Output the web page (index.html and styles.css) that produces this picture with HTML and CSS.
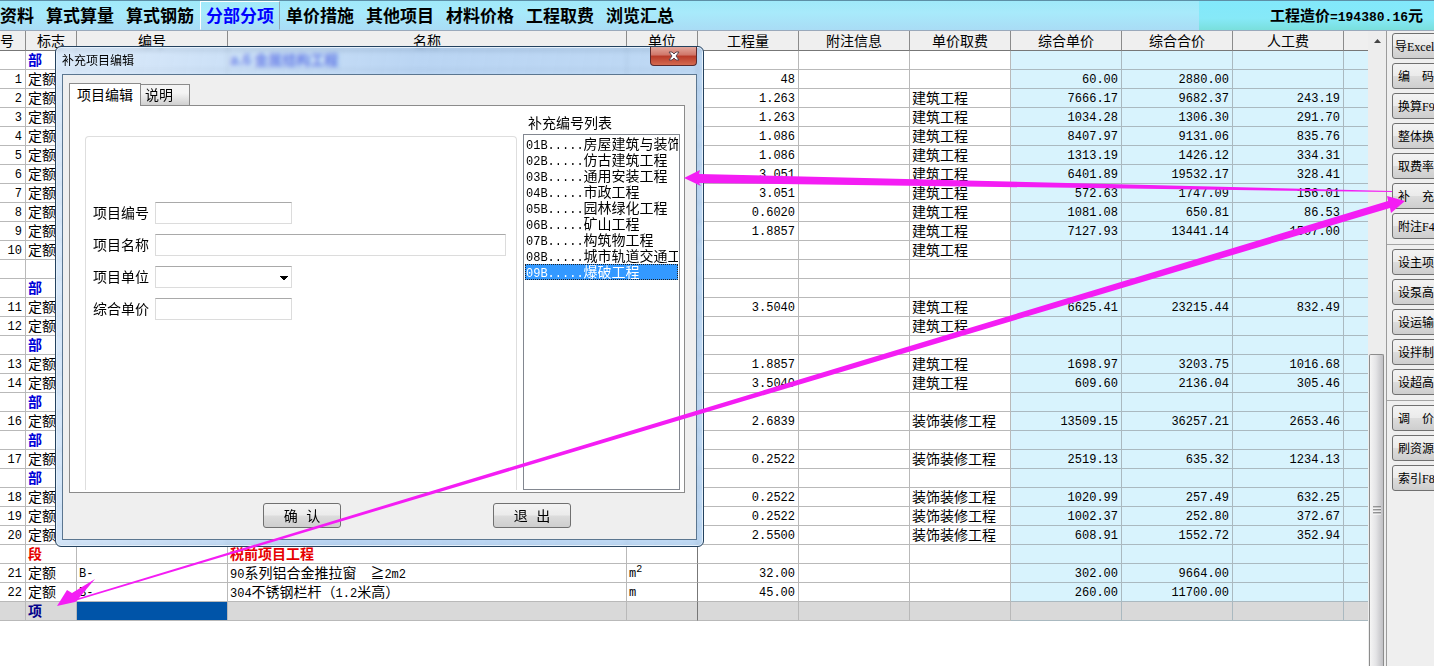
FILE: index.html
```html
<!DOCTYPE html>
<html lang="zh-CN">
<head>
<meta charset="utf-8">
<title>分部分项</title>
<link rel="stylesheet" href="styles.css">
</head>
<body>
<div class="app">
  <header class="topbar">
    <nav class="menu">
      <a class="menu-item first" href="#">资料</a>
      <a class="menu-item" href="#">算式算量</a>
      <a class="menu-item" href="#">算式钢筋</a>
      <a class="menu-item active" href="#">分部分项</a>
      <a class="menu-item" href="#">单价措施</a>
      <a class="menu-item" href="#">其他项目</a>
      <a class="menu-item" href="#">材料价格</a>
      <a class="menu-item" href="#">工程取费</a>
      <a class="menu-item" href="#">浏览汇总</a>
    </nav>
    <div class="total">工程造价<span class="total-num">=194380.16</span>元</div>
  </header>

  <main class="workspace">
    <section class="sheet">
      <table class="grid">
        <colgroup>
          <col class="c-no"><col class="c-flag"><col class="c-code"><col class="c-name"><col class="c-unit"><col class="c-qty"><col class="c-money"><col class="c-qty"><col class="c-money"><col class="c-money"><col class="c-money"><col class="c-rest">
        </colgroup>
        <thead>
          <tr><th class="cut">号</th><th>标志</th><th>编号</th><th>名称</th><th>单位</th><th>工程量</th><th>附注信息</th><th>单价取费</th><th>综合单价</th><th>综合合价</th><th>人工费</th><th></th></tr>
        </thead>
        <tbody>
          <tr class="part"><td></td><td>部</td><td></td><td>a.6 金属结构工程</td><td></td><td></td><td></td><td></td><td></td><td></td><td></td><td></td></tr>
          <tr><td>1</td><td>定额</td><td></td><td></td><td></td><td>48</td><td></td><td></td><td>60.00</td><td>2880.00</td><td></td><td></td></tr>
          <tr><td>2</td><td>定额</td><td></td><td></td><td></td><td>1.263</td><td></td><td>建筑工程</td><td>7666.17</td><td>9682.37</td><td>243.19</td><td></td></tr>
          <tr><td>3</td><td>定额</td><td></td><td></td><td></td><td>1.263</td><td></td><td>建筑工程</td><td>1034.28</td><td>1306.30</td><td>291.70</td><td></td></tr>
          <tr><td>4</td><td>定额</td><td></td><td></td><td></td><td>1.086</td><td></td><td>建筑工程</td><td>8407.97</td><td>9131.06</td><td>835.76</td><td></td></tr>
          <tr><td>5</td><td>定额</td><td></td><td></td><td></td><td>1.086</td><td></td><td>建筑工程</td><td>1313.19</td><td>1426.12</td><td>334.31</td><td></td></tr>
          <tr><td>6</td><td>定额</td><td></td><td></td><td></td><td>3.051</td><td></td><td>建筑工程</td><td>6401.89</td><td>19532.17</td><td>328.41</td><td></td></tr>
          <tr><td>7</td><td>定额</td><td></td><td></td><td></td><td>3.051</td><td></td><td>建筑工程</td><td>572.63</td><td>1747.09</td><td>156.01</td><td></td></tr>
          <tr><td>8</td><td>定额</td><td></td><td></td><td></td><td>0.6020</td><td></td><td>建筑工程</td><td>1081.08</td><td>650.81</td><td>86.53</td><td></td></tr>
          <tr><td>9</td><td>定额</td><td></td><td></td><td></td><td>1.8857</td><td></td><td>建筑工程</td><td>7127.93</td><td>13441.14</td><td>1507.00</td><td></td></tr>
          <tr><td>10</td><td>定额</td><td></td><td></td><td></td><td></td><td></td><td>建筑工程</td><td></td><td></td><td></td><td></td></tr>
          <tr><td></td><td></td><td></td><td></td><td></td><td></td><td></td><td></td><td></td><td></td><td></td><td></td></tr>
          <tr class="part"><td></td><td>部</td><td></td><td></td><td></td><td></td><td></td><td></td><td></td><td></td><td></td><td></td></tr>
          <tr><td>11</td><td>定额</td><td></td><td></td><td></td><td>3.5040</td><td></td><td>建筑工程</td><td>6625.41</td><td>23215.44</td><td>832.49</td><td></td></tr>
          <tr><td>12</td><td>定额</td><td></td><td></td><td></td><td></td><td></td><td>建筑工程</td><td></td><td></td><td></td><td></td></tr>
          <tr class="part"><td></td><td>部</td><td></td><td></td><td></td><td></td><td></td><td></td><td></td><td></td><td></td><td></td></tr>
          <tr><td>13</td><td>定额</td><td></td><td></td><td></td><td>1.8857</td><td></td><td>建筑工程</td><td>1698.97</td><td>3203.75</td><td>1016.68</td><td></td></tr>
          <tr><td>14</td><td>定额</td><td></td><td></td><td></td><td>3.5040</td><td></td><td>建筑工程</td><td>609.60</td><td>2136.04</td><td>305.46</td><td></td></tr>
          <tr class="part"><td></td><td>部</td><td></td><td></td><td></td><td></td><td></td><td></td><td></td><td></td><td></td><td></td></tr>
          <tr><td>16</td><td>定额</td><td></td><td></td><td></td><td>2.6839</td><td></td><td>装饰装修工程</td><td>13509.15</td><td>36257.21</td><td>2653.46</td><td></td></tr>
          <tr class="part"><td></td><td>部</td><td></td><td></td><td></td><td></td><td></td><td></td><td></td><td></td><td></td><td></td></tr>
          <tr><td>17</td><td>定额</td><td></td><td></td><td></td><td>0.2522</td><td></td><td>装饰装修工程</td><td>2519.13</td><td>635.32</td><td>1234.13</td><td></td></tr>
          <tr class="part"><td></td><td>部</td><td></td><td></td><td></td><td></td><td></td><td></td><td></td><td></td><td></td><td></td></tr>
          <tr><td>18</td><td>定额</td><td></td><td></td><td></td><td>0.2522</td><td></td><td>装饰装修工程</td><td>1020.99</td><td>257.49</td><td>632.25</td><td></td></tr>
          <tr><td>19</td><td>定额</td><td></td><td></td><td></td><td>0.2522</td><td></td><td>装饰装修工程</td><td>1002.37</td><td>252.80</td><td>372.67</td><td></td></tr>
          <tr><td>20</td><td>定额</td><td></td><td></td><td></td><td>2.5500</td><td></td><td>装饰装修工程</td><td>608.91</td><td>1552.72</td><td>352.94</td><td></td></tr>
          <tr class="segment"><td></td><td>段</td><td></td><td>税前项目工程</td><td></td><td></td><td></td><td></td><td></td><td></td><td></td><td></td></tr>
          <tr><td>21</td><td>定额</td><td>B-</td><td><span class="latin">90</span>系列铝合金推拉窗　≧<span class="latin">2m2</span></td><td>m<sup>2</sup></td><td>32.00</td><td></td><td></td><td>302.00</td><td>9664.00</td><td></td><td></td></tr>
          <tr><td>22</td><td>定额</td><td>B-</td><td><span class="latin">304</span>不锈钢栏杆（<span class="latin">1.2</span>米高）</td><td>m</td><td>45.00</td><td></td><td></td><td>260.00</td><td>11700.00</td><td></td><td></td></tr>
          <tr class="current"><td></td><td>项</td><td class="selected"></td><td></td><td></td><td></td><td></td><td></td><td></td><td></td><td></td><td></td></tr>
        </tbody>
      </table>
    </section>

    <div class="scrollbar">
      <svg class="scroll-up" viewBox="0 0 18 20"><path d="M6 12h7L9.500 8z" fill="#444"/></svg>
      <div class="thumb">
        <svg class="grip" viewBox="0 0 8 9"><path d="M0 1h8M0 4h8M0 7h8" stroke="#444"/><path d="M0 2h8M0 5h8M0 8h8" stroke="#fff"/></svg>
      </div>
    </div>

    <aside class="tools">
      <div class="tool-group">
        <button class="tool snug">导Excel</button>
        <button class="tool">编　码</button>
        <button class="tool">换算F9</button>
        <button class="tool">整体换</button>
        <button class="tool">取费率</button>
        <button class="tool">补　充</button>
        <button class="tool">附注F4</button>
      </div>
      <div class="tool-group">
        <button class="tool">设主项</button>
        <button class="tool">设泵高</button>
        <button class="tool">设运输</button>
        <button class="tool">设拌制</button>
        <button class="tool">设超高</button>
      </div>
      <div class="tool-group">
        <button class="tool">调　价</button>
        <button class="tool">刷资源</button>
        <button class="tool">索引F8</button>
      </div>
    </aside>
  </main>
</div>

<div class="dialog" role="dialog" aria-labelledby="dialog-title">
  <div class="titlebar">
    <h1 class="title" id="dialog-title">补充项目编辑</h1>
    <button class="close" aria-label="关闭">
      <svg viewBox="0 0 12 10"><path d="M1 1h3l2 2 2-2h3L8 5l3 4H8L6 7 4 9H1l3-4z" fill="#fff" stroke="#5a4650"/></svg>
    </button>
  </div>
  <div class="client">
    <div class="tabs" role="tablist">
      <button class="tab active" role="tab" aria-selected="true">项目编辑</button>
      <button class="tab" role="tab" aria-selected="false">说明</button>
    </div>
    <div class="panel">
      <form class="form">
        <label class="field-label" for="f-code">项目编号</label>
        <input class="field" id="f-code" type="text">
        <label class="field-label" for="f-name">项目名称</label>
        <input class="field wide" id="f-name" type="text">
        <label class="field-label" for="f-unit">项目单位</label>
        <select class="field" id="f-unit"><option></option></select>
        <label class="field-label" for="f-price">综合单价</label>
        <input class="field" id="f-price" type="text">
      </form>
      <div class="codes">
        <h2 class="codes-title" id="codes-title">补充编号列表</h2>
        <div class="list" role="radiogroup" aria-labelledby="codes-title">
          <label class="row"><input type="radio" name="code"><span class="latin">01B.....</span>房屋建筑与装饰</label>
          <label class="row"><input type="radio" name="code"><span class="latin">02B.....</span>仿古建筑工程</label>
          <label class="row"><input type="radio" name="code"><span class="latin">03B.....</span>通用安装工程</label>
          <label class="row"><input type="radio" name="code"><span class="latin">04B.....</span>市政工程</label>
          <label class="row"><input type="radio" name="code"><span class="latin">05B.....</span>园林绿化工程</label>
          <label class="row"><input type="radio" name="code"><span class="latin">06B.....</span>矿山工程</label>
          <label class="row"><input type="radio" name="code"><span class="latin">07B.....</span>构筑物工程</label>
          <label class="row"><input type="radio" name="code"><span class="latin">08B.....</span>城市轨道交通工</label>
          <label class="row"><input type="radio" name="code" checked><span class="latin">09B.....</span>爆破工程</label>
        </div>
      </div>
    </div>
    <div class="actions">
      <button class="action">确 认</button>
      <button class="action">退 出</button>
    </div>
  </div>
</div>

<svg class="arrows" width="1434" height="666" viewBox="0 0 1434 666" fill="#f41df4">
  <path d="M684 178L700 170L699 174L1392 191L1392 192L699 183L701 186Z"/>
  <path d="M57 606L67 590L72 593L95 579L84 592L79 598L1388 201L1387 196L1405 201L1391 213L1390 208L78 600L75 602Z"/>
</svg>
</body>
</html>
```
FILE: styles.css
```css
* { box-sizing: border-box; }

html, body { height: 100%; }

body {
  margin: 0;
  overflow: hidden;
  background: #fff;
  color: #000;
  font-family: "Noto Sans CJK SC", sans-serif;
  font-size: 14px;
}

button, input, select { font: inherit; color: inherit; }

.latin {
  font-family: "Liberation Mono", monospace;
  font-size: 12px;
  line-height: 12px;
}

.app {
  display: flex;
  flex-direction: column;
  height: 100%;
}

/* Top bar */
.topbar {
  display: flex;
  justify-content: space-between;
  height: 31px;
  border-top: 1px solid #5d8fa6;
  border-bottom: 1px solid #9aa9bb;
  background: linear-gradient(#9fe9fa, #a8eafb 40%, #a9dcf5);
}

.menu { display: flex; }

.menu-item {
  padding: 0 5px;
  border: 1px solid transparent;
  color: #000;
  font-size: 17px;
  font-weight: 700;
  line-height: 26px;
  text-decoration: none;
  white-space: nowrap;
}

.menu-item.first { padding-left: 0; border-left: 0; }

.menu-item.active {
  border-color: #fff #8fa9b5 transparent #fff;
  color: #00f;
}

.total {
  width: 235px;
  padding-right: 11px;
  background: linear-gradient(#82e8fb, #86e9f8 60%, #79dfdc);
  font-size: 15px;
  font-weight: 700;
  line-height: 28px;
  text-align: right;
  white-space: nowrap;
}

.total-num {
  font-family: "Liberation Mono", monospace;
  font-size: 13px;
}

/* Worksheet */
.workspace {
  display: flex;
  flex: 1;
  min-height: 0;
}

.sheet {
  flex: 1;
  min-width: 0;
  overflow: hidden;
}

.grid {
  width: 100%;
  table-layout: fixed;
  border-collapse: separate;
  border-spacing: 0;
}

.c-no { width: 26px; }
.c-flag { width: 51px; }
.c-code { width: 151px; }
.c-unit { width: 71px; }
.c-qty { width: 101px; }
.c-money { width: 111px; }
.c-rest { width: 24px; }

.grid th {
  height: 20px;
  padding: 0;
  border-right: 1px solid #8b8b8b;
  border-bottom: 1px solid #777;
  background: #efefef;
  font-weight: 400;
  line-height: 19px;
  white-space: nowrap;
}

.grid th.cut { text-align: left; }

.grid td {
  height: 19px;
  padding: 0 2px;
  border-right: 1px solid #b9b9b9;
  border-bottom: 1px solid #b9b9b9;
  line-height: 16px;
  vertical-align: top;
  white-space: nowrap;
  overflow: hidden;
}

.grid th:last-child, .grid td:last-child { border-right: 0; }

.grid td:nth-child(5) { border-right-color: #777; }

.grid td:nth-child(1),
.grid td:nth-child(3),
.grid td:nth-child(5),
.grid td:nth-child(6),
.grid td:nth-child(n+9) {
  padding-top: 2px;
  font-family: "Liberation Mono", monospace;
  font-size: 12px;
}

.grid td:nth-child(1),
.grid td:nth-child(6),
.grid td:nth-child(n+9) {
  padding-right: 3px;
  text-align: right;
}

.grid td:nth-child(n+9) {
  background: #d8f3fd;
  border-color: #aab9c0;
}

.grid sup {
  font-size: 10px;
  line-height: 8px;
}

.part td { color: #0000d8; font-weight: 700; }
.segment td { color: #e60000; font-weight: 700; }
.current td { color: #00008b; font-weight: 700; }
.grid .current td { background: #d9d9d9; }
.grid .current .selected { background: #0054a8; }

/* Scrollbar */
.scrollbar {
  display: flex;
  flex-direction: column;
  width: 18px;
  background: #ededed;
}

.scroll-up { height: 20px; }

.thumb {
  display: flex;
  flex: 1;
  align-items: center;
  justify-content: center;
  margin: 303px 2px 0 1px;
  border: 1px solid #8c8c8c;
  border-bottom: 0;
  border-radius: 2px 2px 0 0;
  background: linear-gradient(90deg, #f5f5f5, #e4e4e6 45%, #bfbfc3);
}

.grip { width: 8px; height: 9px; }

/* Tool column */
.tools {
  width: 48px;
  overflow: hidden;
  border-left: 1px solid #9b9b9b;
  background: #efefef;
}

.tool-group {
  display: flex;
  flex-direction: column;
  gap: 4px;
  padding: 2px 0 5px 5px;
}

.tool-group + .tool-group {
  padding-top: 4px;
  border-top: 1px solid #a5a5a5;
}

.tool {
  width: 64px;
  height: 26px;
  padding: 0 5px;
  border: 1px solid #707070;
  border-radius: 3px;
  background: linear-gradient(#f3f3f3, #ebebeb 48%, #dcdcdc 52%, #cecece);
  font-family: "Liberation Serif", "Noto Sans CJK SC", serif;
  font-size: 12px;
  text-align: left;
  white-space: nowrap;
}

.tool.snug { padding-left: 2px; }

/* Dialog window */
.dialog {
  position: absolute;
  left: 55px;
  top: 46px;
  width: 649px;
  padding: 0 6px 6px;
  border: 1px solid #24425f;
  border-radius: 6px;
  background: linear-gradient(100deg, rgba(205, 226, 248, .7), rgba(140, 185, 235, .6) 50%, rgba(165, 202, 240, .7));
  backdrop-filter: blur(2px);
  box-shadow: inset 0 0 0 1px #e4f0fb;
}

.titlebar {
  display: flex;
  align-items: flex-start;
  justify-content: space-between;
  height: 27px;
}

.title {
  margin: 0;
  font-size: 12px;
  font-weight: 400;
  line-height: 25px;
}

.close {
  display: flex;
  align-items: center;
  justify-content: center;
  width: 47px;
  height: 19px;
  padding: 0;
  border: 1px solid #5a2a2e;
  border-top: 0;
  border-radius: 0 0 4px 4px;
  background: linear-gradient(#e3a79c, #cf7568 45%, #b83a28 50%, #d46a50);
}

.close svg { width: 12px; height: 10px; }

.client {
  padding: 8px 11px 11px 6px;
  border: 1px solid #5b7690;
  background: #efefef;
}

.tabs {
  display: flex;
  align-items: flex-end;
}

.tab {
  height: 21px;
  padding: 0 16px 2px 4px;
  border: 1px solid #8b8b8b;
  border-left: 0;
  border-bottom: 0;
  background: linear-gradient(#f4f4f4 40%, #d0d0d0);
  line-height: 18px;
}

.tab.active {
  z-index: 1;
  height: 23px;
  margin-bottom: -1px;
  padding: 0 7px 3px;
  border-left: 1px solid #8b8b8b;
  background: #fff;
}

.panel {
  display: flex;
  gap: 6px;
  height: 388px;
  padding: 9px 4px 2px 15px;
  border: 1px solid #8b8b8b;
  background: #fff;
}

.form {
  display: grid;
  flex: 1;
  grid-template-columns: 57px 1fr;
  grid-auto-rows: 22px;
  gap: 10px 5px;
  margin-top: 21px;
  padding: 65px 10px 0 7px;
  border: 1px solid #dedede;
  border-bottom: 0;
  border-radius: 4px 4px 0 0;
}

.field-label {
  line-height: 20px;
  white-space: nowrap;
}

.field {
  width: 137px;
  height: 22px;
  padding: 0 4px;
  border: 1px solid #dcdcdc;
  border-top-color: #a9a9a9;
  border-radius: 0;
  background: #fff;
}

.field.wide { width: 100%; }

select.field {
  appearance: none;
  background:
    linear-gradient(#000, #000) 124px 9px / 8px 1px no-repeat,
    linear-gradient(#000, #000) 125px 10px / 6px 1px no-repeat,
    linear-gradient(#000, #000) 126px 11px / 4px 1px no-repeat,
    linear-gradient(#000, #000) 127px 12px / 2px 1px no-repeat,
    #fff;
}

.codes {
  display: flex;
  flex-direction: column;
  width: 157px;
}

.codes-title {
  margin: 0;
  padding: 0 0 5px 5px;
  font-size: 14px;
  font-weight: 400;
  line-height: 14px;
}

.list {
  flex: 1;
  padding: 1px;
  border: 1px solid #828790;
  overflow: hidden;
}

.row {
  display: block;
  height: 16px;
  padding-left: 1px;
  line-height: 14px;
  white-space: nowrap;
  overflow: hidden;
}

.row input {
  position: absolute;
  opacity: 0;
  width: 1px;
  height: 1px;
  margin: 0;
}

.row:has(input:checked) {
  background: #3399ff;
  color: #fff;
  outline: 1px dotted #222;
  outline-offset: -1px;
}

.actions {
  display: flex;
  justify-content: space-between;
  padding: 10px 114px 0 194px;
}

.action {
  width: 78px;
  height: 25px;
  padding: 0 0 2px;
  border: 1px solid #707070;
  border-radius: 3px;
  background: linear-gradient(#f3f3f3, #ebebeb 48%, #dcdcdc 52%, #cecece);
  font-family: "Liberation Mono", "Noto Sans CJK SC", monospace;
}

/* Callout arrows drawn over the window */
.arrows {
  position: absolute;
  left: 0;
  top: 0;
  pointer-events: none;
}
```
